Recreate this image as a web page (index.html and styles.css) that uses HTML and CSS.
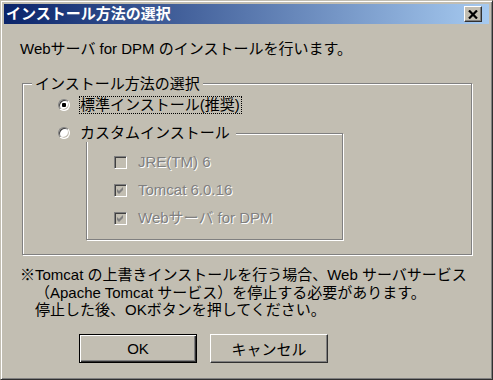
FILE: index.html
```html
<!DOCTYPE html>
<html lang="ja">
<head>
    <meta charset="UTF-8">
    <title>インストール方法の選択</title>
    <link rel="stylesheet" href="styles.css">
</head>
<body>
    <div class="window">
        <div class="titlebar">
            <span class="title">インストール方法の選択</span>
            <button class="close" type="button" aria-label="閉じる">
                <svg width="10" height="9" viewBox="0 0 10 9"><path d="M1 0.5 L9 8.5 M9 0.5 L1 8.5" stroke="#000" stroke-width="2.2"/></svg>
            </button>
        </div>
        <div class="content">
            <p class="intro">Webサーバ for DPM のインストールを行います。</p>

            <div class="group">
                <span class="group-label">インストール方法の選択</span>
                <div class="radio-row">
                    <span class="radio checked"></span>
                    <span class="radio-text focus">標準インストール(推奨)</span>
                </div>
                <div class="subgroup">
                    <div class="radio-row sub-label">
                        <span class="radio"></span>
                        <span class="radio-text">カスタムインストール</span>
                    </div>
                    <div class="check-row">
                        <span class="check"></span>
                        <span class="check-text">JRE(TM) 6</span>
                    </div>
                    <div class="check-row">
                        <span class="check"><svg width="7" height="7" viewBox="0 0 7 7"><path d="M0 2 L2 4 L6 0 L6 3 L2 7 L0 5 Z" fill="#808080"/></svg></span>
                        <span class="check-text">Tomcat 6.0.16</span>
                    </div>
                    <div class="check-row">
                        <span class="check"><svg width="7" height="7" viewBox="0 0 7 7"><path d="M0 2 L2 4 L6 0 L6 3 L2 7 L0 5 Z" fill="#808080"/></svg></span>
                        <span class="check-text">Webサーバ for DPM</span>
                    </div>
                </div>
            </div>

            <p class="note">※Tomcat の上書きインストールを行う場合、Web サーバサービス<br>（Apache Tomcat サービス）を停止する必要があります。<br>停止した後、OKボタンを押してください。</p>

            <div class="buttons">
                <button class="btn default" type="button">OK</button>
                <button class="btn" type="button">キャンセル</button>
            </div>
        </div>
    </div>
</body>
</html>
```

FILE: styles.css
```css
/* Classic dialog */
* {
    box-sizing: border-box;
}

body {
    margin: 0;
    background: #000;
    font-family: "Liberation Sans", "Noto Sans CJK JP", sans-serif;
    font-size: 15px;
    color: #000;
}

.window {
    width: 493px;
    height: 380px;
    padding: 3px;
    background: #c2beb2;
    border: 1px solid;
    border-color: #c2beb2 #303030 #303030 #c2beb2;
    box-shadow: inset 1px 1px #fff, inset -1px -1px #808080;
}

.titlebar {
    height: 20px;
    display: flex;
    align-items: center;
    justify-content: space-between;
    padding: 0 7px 0 2px;
    background: linear-gradient(to right, #0a246a, #a6caf0);
}

.title {
    color: #fff;
    font-weight: bold;
    line-height: 20px;
}

.close {
    width: 18px;
    height: 16px;
    padding: 0;
    display: flex;
    align-items: center;
    justify-content: center;
    background: #c2beb2;
    border: 1px solid;
    border-color: #fff #303030 #303030 #fff;
    box-shadow: inset -1px -1px #808080;
}

.content {
    padding: 0 16px;
}

.intro {
    margin: 16px 0 0;
    line-height: 17px;
}

/* Group boxes */
.group {
    margin: 26px 1px 0 2px;
    padding-bottom: 14px;
    border: 1px solid #808080;
    box-shadow: inset 1px 1px #fff, 1px 1px 0 #fff;
}

.group-label {
    display: block;
    width: fit-content;
    margin: -9px 0 0 9px;
    padding: 0 3px;
    line-height: 17px;
    background: #c2beb2;
}

.radio-row {
    display: flex;
    align-items: center;
    height: 18px;
    margin-top: 4px;
    padding-left: 35px;
}

.radio {
    position: relative;
    width: 12px;
    height: 12px;
    border-radius: 50%;
    background: #fff;
    border: 1px solid;
    border-color: #808080 #fff #fff #808080;
    box-shadow: inset 1px 1px #404040, inset -1px -1px #c2beb2;
}

.radio.checked::after {
    content: "";
    position: absolute;
    left: 3px;
    top: 3px;
    width: 4px;
    height: 4px;
    border-radius: 1px;
    background: #000;
}

.radio-text {
    margin-left: 9px;
    padding-right: 1px;
    line-height: 16px;
    border: 1px solid transparent;
}

.radio-text.focus {
    border: 1px dotted #000;
}

.subgroup {
    width: 257px;
    margin: 19px 0 0 63px;
    padding-bottom: 12px;
    border: 1px solid #808080;
    box-shadow: inset 1px 1px #fff, 1px 1px 0 #fff;
}

.sub-label {
    width: fit-content;
    margin: -10px 0 0 -29px;
    padding: 0 4px 0 0;
    background: #c2beb2;
}

.check-row {
    display: flex;
    align-items: center;
    height: 18px;
    margin-top: 10px;
    padding-left: 27px;
}

.sub-label + .check-row {
    margin-top: 11px;
}

.check {
    width: 13px;
    height: 13px;
    display: flex;
    align-items: center;
    justify-content: center;
    background: #c2beb2;
    border: 1px solid;
    border-color: #808080 #fff #fff #808080;
    box-shadow: inset 1px 1px #404040, inset -1px -1px #c2beb2;
}

.check-text {
    margin-left: 11px;
    color: #808080;
    text-shadow: 1px 1px 0 #fff;
    line-height: 18px;
}

.note {
    margin: 11px 0 0;
    padding-left: 15px;
    text-indent: -15px;
    line-height: 17.5px;
}

/* Buttons */
.buttons {
    display: flex;
    gap: 13px;
    margin-top: 15px;
    padding-left: 59px;
}

.btn {
    width: 118px;
    height: 29px;
    padding: 0;
    font-family: inherit;
    font-size: 15px;
    color: #000;
    background: #c2beb2;
    border: 1px solid;
    border-color: #fff #303030 #303030 #fff;
    box-shadow: inset -1px -1px #808080, inset 1px 1px #c2beb2;
}

.btn.default {
    border: 1px solid #000;
    box-shadow: inset 1px 1px #fff, inset -1px -1px #303030, inset -2px -2px #808080;
}
```
